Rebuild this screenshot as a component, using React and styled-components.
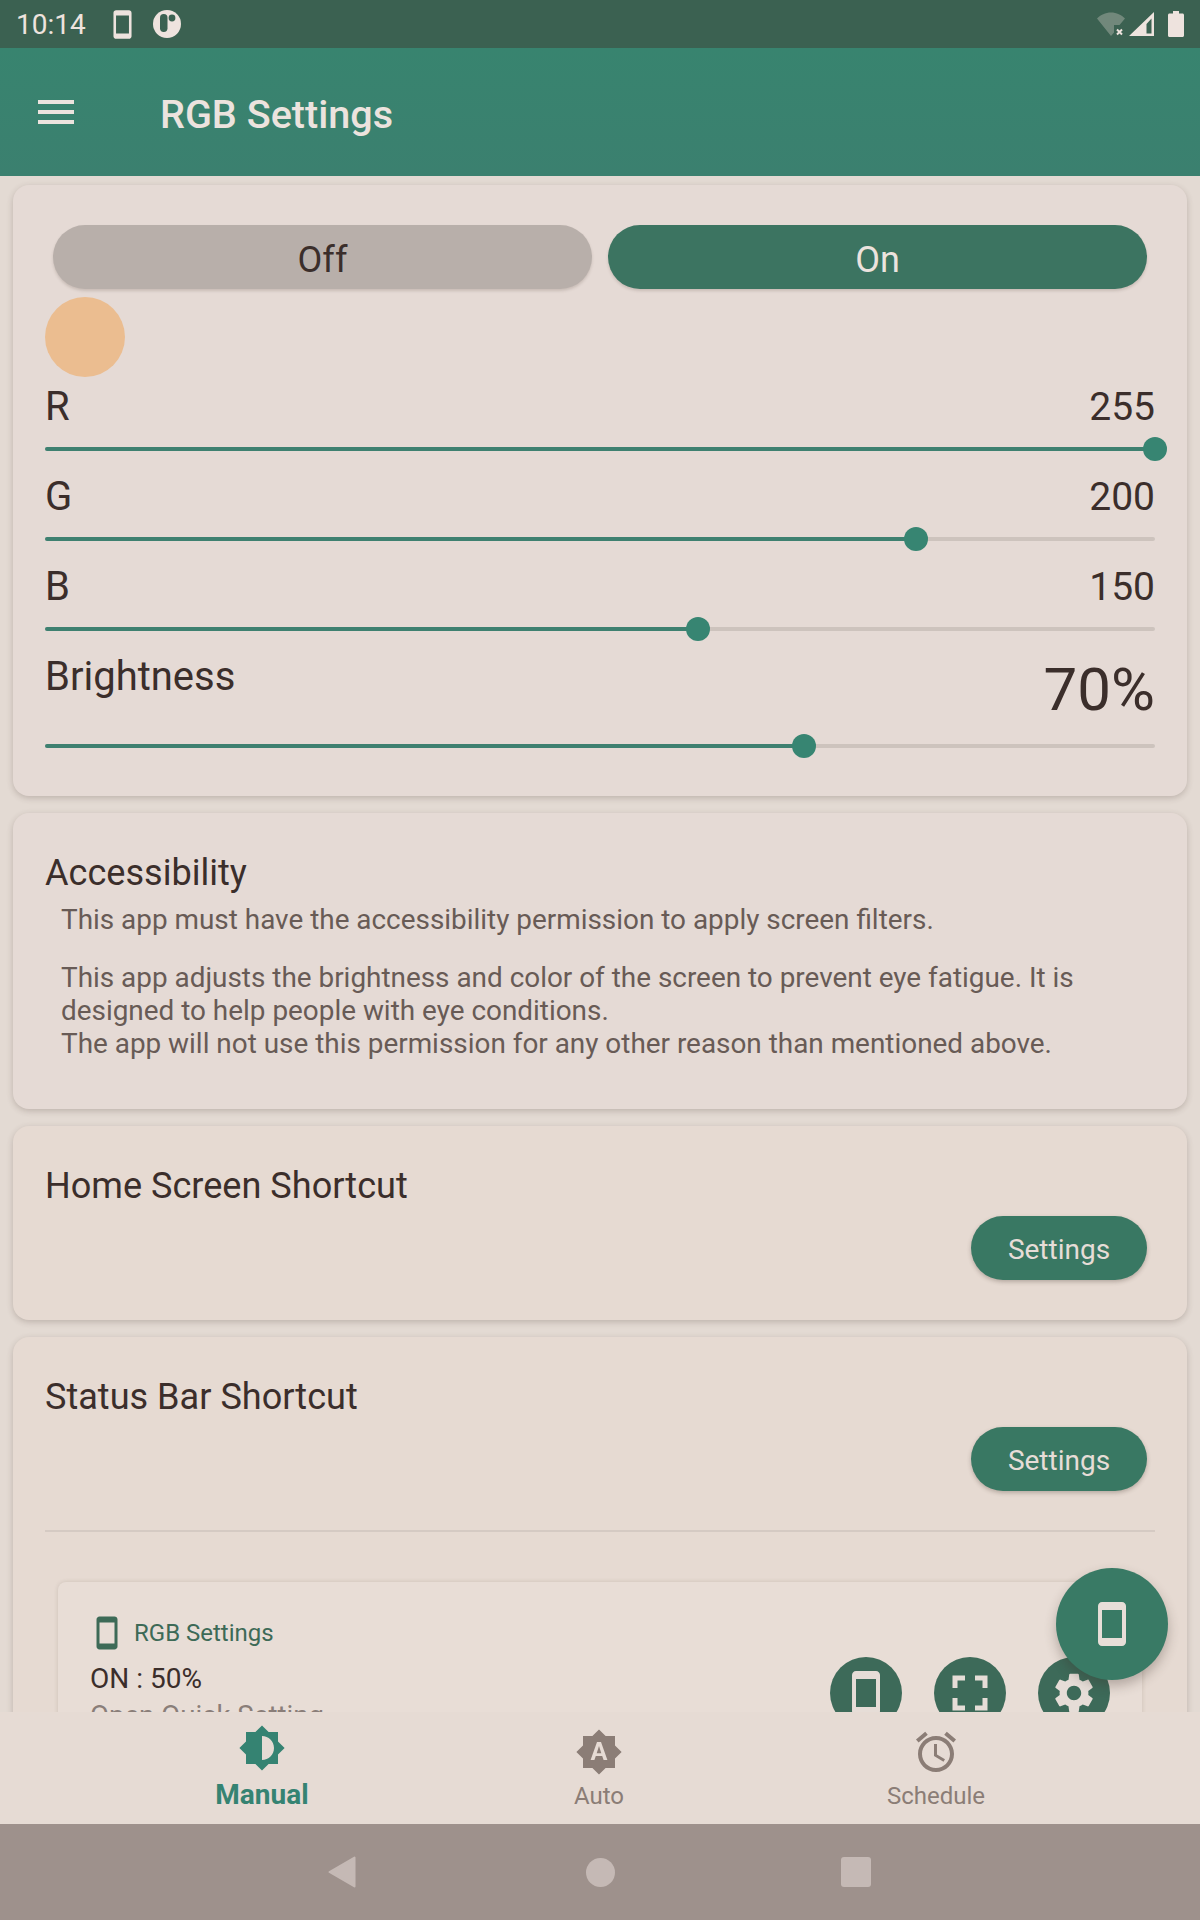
import React from "react";
import styled, { createGlobalStyle } from "styled-components";

const Global = createGlobalStyle`
  html, body { margin: 0; padding: 0; background: #e3dad2; }
  body { font-family: Roboto, "Liberation Sans", sans-serif; }
  * { box-sizing: border-box; }
`;

const Screen = styled.div`
  width: 1200px; height: 1920px; display: flex; flex-direction: column;
  position: relative; overflow: hidden; background: #e3dad3; color: #3b2e2b;
`;
const StatusBar = styled.div`
  height: 48px; flex: none; background: #3b6151; display: flex; align-items: center;
  padding: 0 16px 0 16px; color: #eee3de;
`;
const Clock = styled.span`
  font-size: 28px; line-height: 48px; width: 91px; padding-top: 2px;
`;
const StatusLeft = styled.div`
  display: flex; align-items: center; gap: 15px; flex: 1;
`;
const StatusRight = styled.div`
  display: flex; align-items: center; gap: 4px;
`;
const AppBar = styled.header`
  height: 128px; flex: none; background: linear-gradient(#38846f, #3b806f);
  display: flex; align-items: center; padding: 0 32px; gap: 80px; color: #ece3de;
  z-index: 2;
`;
const Title = styled.h1`
  margin: 0; font-size: 39.6px; font-weight: 500; line-height: 48px; padding-top: 6px; color: #ece3de;
`;
const Scroller = styled.main`
  flex: 1; min-height: 0; overflow: hidden; padding: 9px 13px 0;
  display: flex; flex-direction: column; gap: 17px;
`;
const Card = styled.section`
  flex: none; background: ${p => p.$warm ? "#e6dad2" : "#e5dad5"}; border-radius: 16px;
  padding: ${p => p.$pad || "36px 32px 40px"};
  box-shadow: 0 2px 6px rgba(70, 55, 45, 0.24);
`;
const ToggleRow = styled.div`
  display: flex; gap: 16px; padding: 4px 8px 0;
`;
const Toggle = styled.button`
  flex: 1; height: 64px; border: 0; border-radius: 32px; font: 400 36px/54px Roboto, sans-serif;
  padding: 5px 0 0; background: ${p => p.$on ? "#3c7461" : "#b8afaa"};
  color: ${p => p.$on ? "#ece3de" : "#3b2e2b"};
  box-shadow: 0 2px 3px rgba(70, 55, 45, 0.18);
`;
const Preview = styled.div`
  width: 80px; height: 80px; border-radius: 50%; background: #ebbd90; margin: 8px 0 4px;
`;
const SliderBlock = styled.div`
  padding-bottom: ${p => p.$last ? "0" : "10px"};
`;
const SliderHead = styled.div`
  display: flex; justify-content: space-between; align-items: flex-start;
`;
const SliderLabel = styled.span`
  font-size: 40px; line-height: 48px; padding-top: 2px;
`;
const SliderValue = styled.span`
  font-size: ${p => p.$big ? "60px" : "39px"};
  line-height: ${p => p.$big ? "72px" : "48px"};
  padding: ${p => p.$big ? "3px 0 2px" : "2px 0 0"};
`;
const Track = styled.div`
  position: relative; height: 4px; margin: 16px 0 10px; background: #cdc3bd; border-radius: 2px;
`;
const Fill = styled.div`
  height: 100%; background: #3e8070; border-radius: 2px;
`;
const Thumb = styled.div`
  position: absolute; top: -10px; width: 24px; height: 24px; margin-left: -12px;
  border-radius: 50%; background: #378572;
`;
const CardTitle = styled.h2`
  margin: 0; font-size: 36.1px; font-weight: 400; line-height: 48px; color: #3b2e2b;
`;
const Body = styled.p`
  margin: ${p => p.$first ? "6px 0 0" : "25px 0 0"}; padding: 0 32px 0 16px;
  font-size: 27.9px; line-height: 33px; color: #685b56;
`;
const ActionRow = styled.div`
  display: flex; justify-content: flex-end; margin-top: 6px; padding-right: 8px;
`;
const ActionButton = styled.button`
  width: 176px; height: 64px; border: 0; border-radius: 32px; background: #397863; color: #e6ddd7;
  font: 400 28px/60px Roboto, sans-serif; padding: 4px 0 0; box-shadow: 0 2px 4px rgba(70, 55, 45, 0.3);
`;
const Divider = styled.hr`
  border: 0; height: 2px; background: #d5cac3; margin: 39px 0 50px;
`;
const Notification = styled.div`
  margin: 0 13px; height: 240px; border-radius: 8px 8px 0 0; background: #e8ddd6;
  display: flex; justify-content: space-between; padding: 34px 32px 0 32px;
  box-shadow: 0 0 4px rgba(70, 55, 45, 0.16);
`;
const NoteInfo = styled.div`
  display: flex; flex-direction: column;
`;
const NoteHead = styled.div`
  display: flex; align-items: center; gap: 9px; height: 34px; margin-left: -1px; color: #3d6a57;
  font-size: 24px; line-height: 34px;
`;
const NoteStatus = styled.div`
  font-size: 28px; line-height: 40px; margin-top: 9px; color: #3b2e2b;
`;
const NoteSub = styled.div`
  font-size: 27.6px; line-height: 32px; margin-top: 1px; color: #8a7e79;
`;
const NoteActions = styled.div`
  display: flex; gap: 32px; margin-top: 41px; align-self: flex-start;
`;
const RoundIcon = styled.div`
  width: 72px; height: 72px; border-radius: 50%; background: #3d6a59; color: #e6ddd7;
  display: flex; align-items: center; justify-content: center;
`;
const Fab = styled.button`
  position: absolute; left: 1056px; top: 1568px; width: 112px; height: 112px; border: 0;
  border-radius: 50%; background: #397a65; color: #e8ded8; display: flex; align-items: center;
  justify-content: center; padding: 0; box-shadow: 0 6px 12px rgba(60, 45, 40, 0.3); z-index: 3;
`;
const BottomNav = styled.nav`
  height: 112px; flex: none; background: #e6dbd4; display: flex; justify-content: center;
  padding-right: 2px; z-index: 2; position: relative;
`;
const NavItem = styled.div`
  width: 337px; display: flex; flex-direction: column; align-items: center;
  padding-top: ${p => p.$active ? "12px" : "16px"};
  color: ${p => p.$active ? "#358372" : "#8b7d76"};
`;
const NavLabel = styled.span`
  font-size: ${p => p.$active ? "28px" : "24px"};
  font-weight: ${p => p.$active ? 700 : 400};
  line-height: 36px; margin-top: ${p => p.$active ? "5px" : "2px"};
`;
const SystemBar = styled.div`
  height: 96px; flex: none; background: #9e918c; display: flex; align-items: center;
  justify-content: center; gap: 228px; color: #c5b9b5; z-index: 2; padding-right: 2px;
`;
const HomeDot = styled.div`
  width: 29px; height: 29px; border-radius: 50%; background: #c5b9b5; margin: 0 -2px 0 2px;
`;
const RecentSquare = styled.div`
  width: 30px; height: 30px; border-radius: 3px; background: #c5b9b5;
`;

const Icon = ({ d, size = 48 }) => (
  <svg width={size} height={size} viewBox="0 0 24 24" fill="currentColor" aria-hidden="true"><path d={d} /></svg>
);
const P = {
  menu: "M3 18h18v-2H3v2zm0-5h18v-2H3v2zm0-7v2h18V6H3z",
  phone: "M17 1.01L7 1c-1.1 0-1.99.9-1.99 2v18c0 1.1.89 2 1.99 2h10c1.1 0 2-.9 2-2V3c0-1.1-.9-1.99-2-1.99zM17 19H7V5h10v14z",
  full: "M7 14H5v5h5v-2H7v-3zm-2-4h2V7h3V5H5v5zm12 7h-3v2h5v-5h-2v3zM14 5v2h3v3h2V5h-5z",
  gear: "M19.14 12.94c.04-.3.06-.61.06-.94 0-.32-.02-.64-.07-.94l2.03-1.58c.18-.14.23-.41.12-.61l-1.92-3.32c-.12-.22-.37-.29-.59-.22l-2.39.96c-.5-.38-1.03-.7-1.62-.94l-.36-2.54c-.04-.24-.24-.41-.48-.41h-3.84c-.24 0-.43.17-.47.41l-.36 2.54c-.59.24-1.13.57-1.62.94l-2.39-.96c-.22-.08-.47 0-.59.22L2.74 8.87c-.12.21-.08.47.12.61l2.03 1.58c-.05.3-.09.63-.09.94s.02.64.07.94l-2.03 1.58c-.18.14-.23.41-.12.61l1.92 3.32c.12.22.37.29.59.22l2.39-.96c.5.38 1.03.7 1.62.94l.36 2.54c.05.24.24.41.48.41h3.84c.24 0 .44-.17.47-.41l.36-2.54c.59-.24 1.13-.56 1.62-.94l2.39.96c.22.08.47 0 .59-.22l1.92-3.32c.12-.22.07-.47-.12-.61l-2.01-1.58zM12 15.6c-1.98 0-3.6-1.62-3.6-3.6s1.62-3.6 3.6-3.6 3.6 1.62 3.6 3.6-1.62 3.6-3.6 3.6z",
  medium: "M20 15.31L23.31 12 20 8.69V4h-4.69L12 .69 8.69 4H4v4.69L.69 12 4 15.31V20h4.69L12 23.31 15.31 20H20v-4.69zM12 18V6c3.31 0 6 2.69 6 6s-2.69 6-6 6z",
  auto: "M10.85 12.65h2.3L12 9l-1.15 3.65zM20 8.69V4h-4.69L12 .69 8.69 4H4v4.69L.69 12 4 15.31V20h4.69L12 23.31 15.31 20H20v-4.69L23.31 12 20 8.69zM14.3 16l-.7-2h-3.2l-.7 2H7.8L11 7h2l3.2 9h-1.9z",
  alarm: "M22 5.72l-4.6-3.86-1.29 1.53 4.6 3.86L22 5.72zM7.88 3.39L6.6 1.86 2 5.71l1.29 1.53 4.59-3.85zM12.5 8H11v6l4.75 2.85.75-1.23-4-2.37V8zM12 4c-4.97 0-9 4.03-9 9s4.02 9 9 9c4.97 0 9-4.03 9-9s-4.03-9-9-9zm0 16c-3.87 0-7-3.13-7-7s3.13-7 7-7 7 3.13 7 7-3.13 7-7 7z",
};

const PassIcon = () => (
  <svg width="28" height="28" viewBox="0 0 28 28">
    <circle cx="14" cy="14" r="14" fill="#eee3de" />
    <rect x="7" y="4" width="7.5" height="18" rx="3.7" fill="#3b6151" />
    <circle cx="19" cy="8" r="3.4" fill="#3b6151" />
  </svg>
);
const WifiIcon = () => (
  <svg width="28" height="24" viewBox="0 0 28 24">
    <path d="M0 6.5C3.5 3 8.5.5 14 .5S24.5 3 28 6.5L22.5 13H17v7.5L14 24z" fill="#eee3de" fillOpacity=".3" />
    <path d="M20 17.5l5 5m0-5l-5 5" stroke="#eee3de" strokeWidth="2" />
  </svg>
);
const SignalIcon = () => (
  <svg width="25" height="24" viewBox="0 0 25 24">
    <path fillRule="evenodd" d="M0 24H25V0zM17.5 21.5H22.5V6.5L17.5 12z" fill="#eee3de" />
  </svg>
);
const BatteryGlyph = styled.svg`
  margin-left: 10px;
`;
const BatteryIcon = () => (
  <BatteryGlyph width="16" height="26" viewBox="0 0 16 26">
    <path d="M5 0h6v2.5h3.5c.8 0 1.5.7 1.5 1.5v20.5c0 .8-.7 1.5-1.5 1.5h-13C.7 26 0 25.3 0 24.5V4c0-.8.7-1.5 1.5-1.5H5z" fill="#eee3de" />
  </BatteryGlyph>
);
const BackIcon = () => (
  <svg width="28" height="32" viewBox="0 0 28 32">
    <path d="M26.5 1.5v29L1.5 16z" fill="currentColor" stroke="currentColor" strokeWidth="2" strokeLinejoin="round" />
  </svg>
);

const sliders = [
  { label: "R", value: "255", ratio: 1 },
  { label: "G", value: "200", ratio: 200 / 255 },
  { label: "B", value: "150", ratio: 150 / 255 },
];

const Slider = ({ ratio }) => (
  <Track>
    <Fill style={{ width: `${ratio * 100}%` }} />
    <Thumb style={{ left: `${ratio * 100}%` }} />
  </Track>
);

export default function App() {
  return (
    <Screen>
      <Global />
      <StatusBar>
        <Clock>10:14</Clock>
        <StatusLeft>
          <Icon d={P.phone} size={31} />
          <PassIcon />
        </StatusLeft>
        <StatusRight>
          <WifiIcon />
          <SignalIcon />
          <BatteryIcon />
        </StatusRight>
      </StatusBar>
      <AppBar>
        <Icon d={P.menu} />
        <Title>RGB Settings</Title>
      </AppBar>
      <Scroller>
        <Card $pad="36px 32px 38px">
          <ToggleRow>
            <Toggle>Off</Toggle>
            <Toggle $on>On</Toggle>
          </ToggleRow>
          <Preview />
          {sliders.map(s => (
            <SliderBlock key={s.label}>
              <SliderHead>
                <SliderLabel>{s.label}</SliderLabel>
                <SliderValue>{s.value}</SliderValue>
              </SliderHead>
              <Slider ratio={s.ratio} />
            </SliderBlock>
          ))}
          <SliderBlock $last>
            <SliderHead>
              <SliderLabel>Brightness</SliderLabel>
              <SliderValue $big>70%</SliderValue>
            </SliderHead>
            <Slider ratio={0.684} />
          </SliderBlock>
        </Card>
        <Card $pad="36px 32px 49px">
          <CardTitle>Accessibility</CardTitle>
          <Body $first>This app must have the accessibility permission to apply screen filters.</Body>
          <Body>
            This app adjusts the brightness and color of the screen to prevent eye fatigue. It is designed to help people with eye conditions.
            <br />
            The app will not use this permission for any other reason than mentioned above.
          </Body>
        </Card>
        <Card $warm $pad="36px 32px 40px">
          <CardTitle>Home Screen Shortcut</CardTitle>
          <ActionRow><ActionButton>Settings</ActionButton></ActionRow>
        </Card>
        <Card $warm $pad="36px 32px 0">
          <CardTitle>Status Bar Shortcut</CardTitle>
          <ActionRow><ActionButton>Settings</ActionButton></ActionRow>
          <Divider />
          <Notification>
            <NoteInfo>
              <NoteHead><Icon d={P.phone} size={36} />RGB Settings</NoteHead>
              <NoteStatus>ON : 50%</NoteStatus>
              <NoteSub>Open Quick Setting</NoteSub>
            </NoteInfo>
            <NoteActions>
              <RoundIcon><Icon d={P.phone} /></RoundIcon>
              <RoundIcon><Icon d={P.full} size={60} /></RoundIcon>
              <RoundIcon><Icon d={P.gear} /></RoundIcon>
            </NoteActions>
          </Notification>
        </Card>
      </Scroller>
      <Fab><Icon d={P.phone} /></Fab>
      <BottomNav>
        <NavItem $active><Icon d={P.medium} /><NavLabel $active>Manual</NavLabel></NavItem>
        <NavItem><Icon d={P.auto} /><NavLabel>Auto</NavLabel></NavItem>
        <NavItem><Icon d={P.alarm} /><NavLabel>Schedule</NavLabel></NavItem>
      </BottomNav>
      <SystemBar>
        <BackIcon />
        <HomeDot />
        <RecentSquare />
      </SystemBar>
    </Screen>
  );
}
